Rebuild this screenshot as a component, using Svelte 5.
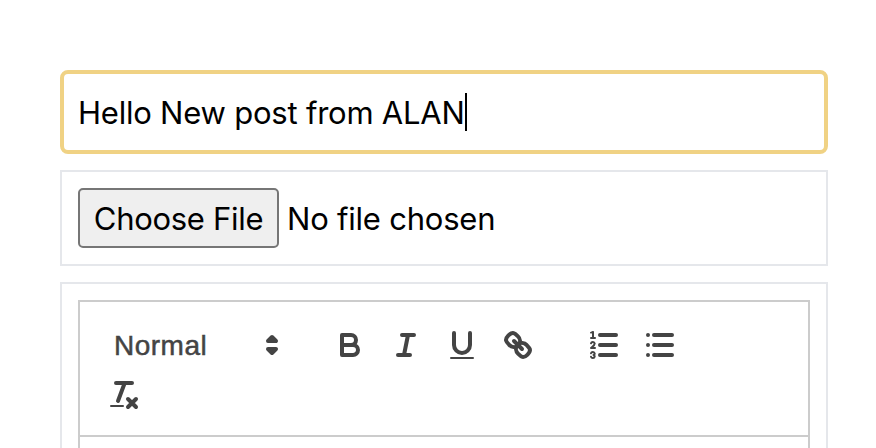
<script>
  const formats = ['bold', 'italic', 'underline', 'link'];
  const lists = ['ordered', 'bullet'];
</script>

{#snippet icon(name)}
  <svg class="icon" viewBox="0 0 18 18">
    {#if name === 'bold'}
      <path d="M5,4H9.5A2.5,2.5,0,0,1,12,6.5v0A2.5,2.5,0,0,1,9.5,9H5V4Z" />
      <path d="M5,9h5.5A2.5,2.5,0,0,1,13,11.5v0A2.5,2.5,0,0,1,10.5,14H5V9Z" />
    {:else if name === 'italic'}
      <path d="M7,4H13M5,14H11M8,14L10,4" />
    {:else if name === 'underline'}
      <path d="M5,3V9a4.012,4.012,0,0,0,4,4H9a4.012,4.012,0,0,0,4-4V3" />
      <rect class="fill" x="3" y="15" width="12" height="1" rx="0.5" />
    {:else if name === 'link'}
      <path d="M7,7L11,11" />
      <path d="M8.9,4.577a3.476,3.476,0,0,1,.36,4.679A3.476,3.476,0,0,1,4.577,8.9C3.185,7.5,2.035,6.4,4.217,4.217S7.5,3.185,8.9,4.577Z" />
      <path d="M13.423,9.1a3.476,3.476,0,0,0-4.679-.36,3.476,3.476,0,0,0,.36,4.679c1.392,1.392,2.5,2.542,4.679.36S14.815,10.5,13.423,9.1Z" />
    {:else if name === 'ordered'}
      <path d="M7,4H15M7,9H15M7,14H15" />
      <path class="thin" d="M2.5,5.5H4.5" />
      <path class="fill" d="M3.5,6A0.5,0.5,0,0,1,3,5.5V3.085l-0.276.138A0.5,0.5,0,0,1,2.053,3c-0.124-.247-0.023-0.324.224-0.447l1-.5A0.5,0.5,0,0,1,4,2.5v3A0.5,0.5,0,0,1,3.5,6Z" />
      <path class="thin" d="M4.5,10.5h-2c0-.234,1.85-1.076,1.85-2.234A0.959,0.959,0,0,0,2.5,8.156" />
      <path class="thin" d="M2.5,14.846a0.959,0.959,0,0,0,1.85-.109A0.7,0.7,0,0,0,3.75,14a0.688,0.688,0,0,0,.6-0.736,0.959,0.959,0,0,0-1.85-.109" />
    {:else if name === 'bullet'}
      <path d="M6,4H15M6,9H15M6,14H15M3,4H3M3,9H3M3,14H3" />
    {:else if name === 'clean'}
      <path d="M5,3H13M6,12L9.35,3M11,11L15,15M15,11L11,15" />
      <rect class="fill" x="2" y="14" width="7" height="1" rx="0.5" />
    {:else}
      <path class="solid" d="M7,11L9,13L11,11Z" />
      <path class="solid" d="M7,7L9,5L11,7Z" />
    {/if}
  </svg>
{/snippet}

<main>
  <div class="title"><span class="value">Hello New post from ALAN</span><i class="caret"></i></div>

  <div class="file">
    <button class="choose">Choose File</button>
    <span class="none">No file chosen</span>
  </div>

  <div class="editor">
    <div class="toolbar">
      <div class="group">
        <div class="picker"><span>Normal</span>{@render icon('picker')}</div>
      </div>
      <div class="group">
        {#each formats as name}
          <button class="tool" aria-label={name}>{@render icon(name)}</button>
        {/each}
      </div>
      <div class="group">
        {#each lists as name}
          <button class="tool" aria-label={name}>{@render icon(name)}</button>
        {/each}
      </div>
      <div class="group">
        <button class="tool" aria-label="clean">{@render icon('clean')}</button>
      </div>
    </div>
    <div class="content"></div>
  </div>
</main>

<style>
  :global(body) {
    background: #fff;
    overflow: hidden;
  }
  main {
    box-sizing: border-box;
    height: 448px;
    padding: 70px 48px 0 60px;
    overflow: hidden;
    display: flex;
    flex-direction: column;
    gap: 16px;
    font-family: Inter, sans-serif;
    font-size: 31px;
    letter-spacing: -0.22px;
    color: #000;
  }
  main > div,
  .toolbar,
  .choose {
    box-sizing: border-box;
  }
  .title {
    flex: none;
    height: 84px;
    border: 4px solid #f0d284;
    border-radius: 8px;
    padding: 0 14px;
    display: flex;
    align-items: center;
    white-space: nowrap;
  }
  .value,
  .none {
    padding-top: 1px;
  }
  .caret {
    width: 2px;
    height: 38px;
    background: #000;
  }
  .file {
    flex: none;
    height: 96px;
    border: 2px solid #e5e7eb;
    padding: 0 16px;
    display: flex;
    align-items: center;
    gap: 8px;
    white-space: nowrap;
  }
  .choose {
    width: 201px;
    height: 60px;
    padding: 1px 0 0;
    border: 2px solid #767676;
    border-radius: 5px;
    background: #efefef;
    font: inherit;
    letter-spacing: -0.3px;
    color: #000;
  }
  .editor {
    flex: none;
    height: 240px;
    border: 2px solid #e5e7eb;
    padding: 16px;
  }
  .toolbar {
    height: 137px;
    border: 2px solid #ccc;
    padding: 19px 16px 0;
    display: flex;
    flex-wrap: wrap;
    align-content: flex-start;
    row-gap: 2px;
  }
  .content {
    height: 120px;
    border: 2px solid #ccc;
    border-top: 0;
  }
  .group {
    display: flex;
    margin-right: 30px;
  }
  .picker {
    box-sizing: border-box;
    width: 196px;
    height: 48px;
    padding: 0 2px 0 18px;
    display: flex;
    align-items: center;
    justify-content: space-between;
    font: 28px "Liberation Sans", sans-serif;
    letter-spacing: 0.5px;
    color: #444;
    -webkit-text-stroke: 0.5px #444;
  }
  .picker span {
    padding-top: 2px;
  }
  .tool {
    width: 56px;
    height: 48px;
    padding: 6px 10px;
    border: 0;
    background: none;
    display: flex;
  }
  .icon {
    display: block;
    width: 36px;
    height: 36px;
    fill: none;
    stroke: #444;
    stroke-width: 2;
    stroke-linecap: round;
    stroke-linejoin: round;
  }
  .fill {
    fill: #444;
    stroke: none;
  }
  .solid {
    fill: #444;
  }
  .thin {
    stroke-width: 1;
  }
</style>
